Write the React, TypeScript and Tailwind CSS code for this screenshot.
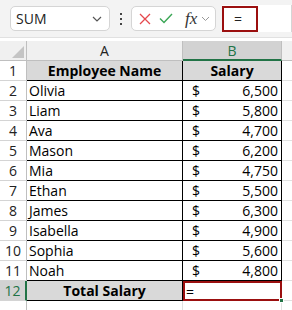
import React from 'react';

const rows: [string, string][] = [
  ['Olivia', '6,500'],
  ['Liam', '5,800'],
  ['Ava', '4,700'],
  ['Mason', '6,200'],
  ['Mia', '4,750'],
  ['Ethan', '5,500'],
  ['James', '6,300'],
  ['Isabella', '4,900'],
  ['Sophia', '5,600'],
  ['Noah', '4,800'],
];

const font = { fontFamily: '"Open Sans", "Noto Sans", sans-serif' };

const RowHead: React.FC<{ n: number; active?: boolean }> = ({ n, active }) => (
  <div
    className={`w-[27px] shrink-0 flex items-center justify-center text-[14px] border-b border-[#d4d4d4] ${
      active ? 'bg-[#d2d2d2] text-[#217346] border-r-2 border-r-[#217346]' : 'bg-white text-[#222] border-r border-r-[#bfbfbf]'
    }`}
  >
    {n}
  </div>
);

export default function App() {
  return (
    <div className="w-[292px] h-[310px] overflow-hidden bg-white text-black" style={font}>
      {/* formula bar */}
      <div className="h-[38px] bg-[#f3f3f3] flex items-center border-b border-[#e1e1e1]">
        <div className="ml-[10px] w-[100px] h-[25px] bg-white border border-[#d5d5d5] rounded-[5px] flex items-center justify-between pl-[5px] pr-[7px]">
          <span className="text-[14px] text-[#222]">SUM</span>
          <svg width="10" height="6" viewBox="0 0 10 6">
            <path d="M1 1l4 4 4-4" fill="none" stroke="#555" strokeWidth="1.2" />
          </svg>
        </div>
        <div className="ml-[10px] w-[2px] flex flex-col gap-[3px]">
          <span className="w-[2px] h-[2px] bg-[#444]" />
          <span className="w-[2px] h-[2px] bg-[#444]" />
          <span className="w-[2px] h-[2px] bg-[#444]" />
        </div>
        <div className="ml-[9px] w-[85px] h-[25px] bg-white border border-[#d5d5d5] rounded-[5px] flex items-center pl-[7px]">
          <svg width="12" height="12" viewBox="0 0 12 12">
            <path d="M1 1l10 10M11 1L1 11" stroke="#e5484d" strokeWidth="1.3" />
          </svg>
          <svg className="ml-[8px]" width="14" height="11" viewBox="0 0 14 11">
            <path d="M1 5.5l4 4L13 1" fill="none" stroke="#3aa655" strokeWidth="1.4" />
          </svg>
          <span className="ml-[12px] text-[17px] italic leading-none text-[#333]" style={{ fontFamily: '"Liberation Serif", serif' }}>
            fx
          </span>
          <svg className="ml-[4px]" width="9" height="6" viewBox="0 0 9 6">
            <path d="M1 1l3.5 3.5L8 1" fill="none" stroke="#999" strokeWidth="1" />
          </svg>
        </div>
        <div className="ml-[6px] flex-1 h-[27px] bg-white border-r border-[#d5d5d5] flex items-center">
          <div className="w-[36px] h-[26px] border-2 border-[#9b0f0f] flex items-center pl-[10px] text-[14px] text-[#222]">=</div>
        </div>
      </div>
      <div className="h-[3px] bg-white" />
      {/* column headers */}
      <div className="flex h-[20px]">
        <div className="w-[27px] shrink-0 bg-[#f0f0f0] border-r border-b border-[#bfbfbf] relative">
          <svg className="absolute right-[2px] bottom-[2px]" width="12" height="12" viewBox="0 0 12 12">
            <path d="M12 0L12 12L0 12Z" fill="#c4c4c4" />
          </svg>
        </div>
        <div className="w-[156px] shrink-0 bg-[#f0f0f0] border-r border-b border-[#bfbfbf] flex items-center justify-center text-[14px] text-[#222]">
          A
        </div>
        <div className="w-[99px] shrink-0 bg-[#d2d2d2] border-r border-[#bfbfbf] border-b-2 border-b-[#217346] flex items-center justify-center text-[14px] text-[#217346]">
          B
        </div>
        <div className="flex-1 bg-[#f0f0f0] border-b border-[#bfbfbf]" />
      </div>
      {/* header row */}
      <div className="flex h-[20px]">
        <RowHead n={1} />
        <div className="w-[156px] shrink-0 bg-[#d9d9d9] border-r border-b border-black flex items-center justify-center text-[14px] font-bold">
          Employee Name
        </div>
        <div className="w-[99px] shrink-0 bg-[#d9d9d9] border-r border-b border-black flex items-center justify-center text-[14px] font-bold">
          Salary
        </div>
        <div className="flex-1 border-b border-[#e1e1e1]" />
      </div>
      {rows.map(([name, sal], i) => (
        <div key={name} className="flex h-[20px]">
          <RowHead n={i + 2} />
          <div className="w-[156px] shrink-0 border-r border-b border-black flex items-center pl-[2px] text-[14px]">
            {name}
          </div>
          <div className="w-[99px] shrink-0 border-r border-b border-black flex items-center justify-between pl-[9px] pr-[3px] text-[14px]">
            <span>$</span>
            <span>{sal}</span>
          </div>
          <div className="flex-1 border-b border-[#e1e1e1]" />
        </div>
      ))}
      {/* total row */}
      <div className="flex h-[20px]">
        <RowHead n={12} active />
        <div className="w-[156px] shrink-0 bg-[#d9d9d9] border-r border-b border-black flex items-center justify-center text-[14px] font-bold">
          Total Salary
        </div>
        <div className="w-[99px] shrink-0 relative border-2 border-[#9b0f0f] flex items-center pl-[1px] text-[14px]">
          =
          <span className="absolute -right-[4px] -bottom-[4px] w-[5px] h-[5px] bg-[#217346] border border-white" />
        </div>
        <div className="flex-1 border-b border-[#e1e1e1]" />
      </div>
      <div className="flex h-[20px]">
        <div className="w-[27px] shrink-0 bg-white border-r border-[#bfbfbf]" />
        <div className="w-[156px] shrink-0 border-r border-[#e1e1e1]" />
        <div className="w-[99px] shrink-0 border-r border-[#e1e1e1]" />
      </div>
    </div>
  );
}
